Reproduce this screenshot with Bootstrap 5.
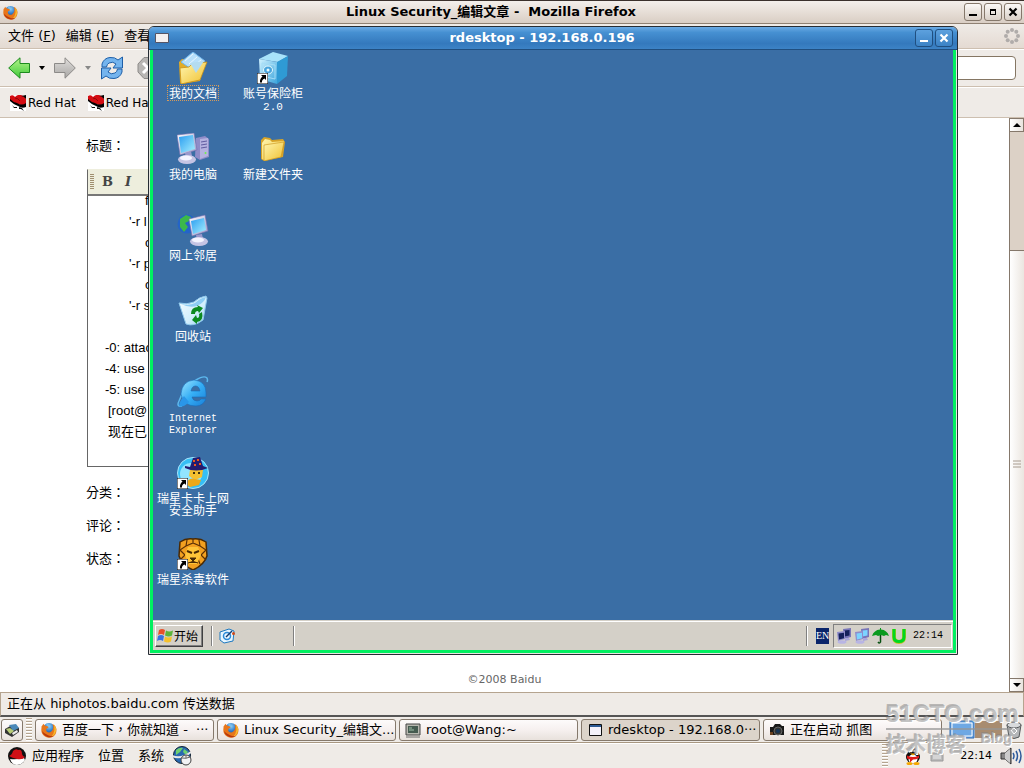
<!DOCTYPE html>
<html lang="zh-CN">
<head>
<meta charset="utf-8">
<meta name="viewport" content="width=device-width, initial-scale=1">
<title>Linux Security_编辑文章 - Mozilla Firefox</title>
<link href="https://cdn.jsdelivr.net/npm/bootstrap@5.3.0/dist/css/bootstrap.min.css" rel="stylesheet">
<style>
:root{--face:#efebe7;--edge:#b5a48f;--ui:"DejaVu Sans","Noto Sans CJK SC",sans-serif}
body{font:13px/20px var(--ui);color:#000;background:#fff;overflow:hidden}
svg{flex:none;display:block}
a,a:hover{color:inherit;text-decoration:none}
button{font:inherit;color:inherit;padding:0;border:0;background:none}
.face{background:var(--face)}
.title-strip{height:24px;background:linear-gradient(#f3efeb,#e4dbd3 60%,#d9cec4);border-top:1px solid #3a302c;border-bottom:1px solid #8f8173;font-weight:700;padding:0 2px 0 3px}
.title-btns{display:flex;gap:2px}
.win-btn{width:18px;height:18px;border:1px solid #85786b;border-radius:3px;background:linear-gradient(#fbf9f7,#d9d0c7);display:grid;place-items:center}
.menu-strip{height:25px;background:linear-gradient(#efebe7,#e4dad2);border-bottom:1px solid #cdbfb0;gap:10px}
.nav-strip{height:38px;border-top:1px solid #fff;border-bottom:1px solid #cdbfb0}
.nav-stop{margin-left:12px}
.mark-strip{height:31px;border-top:1px solid #fff;border-bottom:1px solid #cdbfb0;font-size:12px;gap:12px;padding-left:10px}
.mark-strip a{display:flex;align-items:center;gap:2px}
.address{width:300px;height:24px;border:1px solid #857663;border-radius:4px;background:#fff}
.page-area{min-height:0}
.page-pane{padding:16px 0 0 86px;min-height:0}
.field-name{font:13px/24px "Liberation Sans","Noto Sans CJK TC",sans-serif}
.field-row{height:33px;display:flex;align-items:center}
.editor{margin:11px 86px 9px 1px;height:298px;border:1px solid #666;border-top-color:#eeeedd}
.editor-bar{height:26px;background:#eeeedd;border-bottom:2px solid #777;font:700 13px/22px "DejaVu Serif",serif;color:#444;padding-left:2px;gap:12px}
.editor-bar .grip{margin-right:-4px}
.editor-text{font:13px/21px "Liberation Sans","Noto Sans CJK SC",sans-serif;height:270px;overflow:hidden}
.lines{margin-top:-6px}
.in-1{padding-left:17px}.in-2{padding-left:20px}.in-3{padding-left:41px}.in-4{padding-left:57px}
.grip{width:4px;height:16px;background:repeating-linear-gradient(#a08f70 0 1px,transparent 1px 2px)}
.grip-tall{width:6px;height:24px;background:repeating-linear-gradient(#b5a48f 0 1px,#fff 1px 2px,var(--face) 2px 3px)}
.copyright{font:11px/24px "DejaVu Sans",sans-serif;color:#666;margin-left:-86px}
.scroller{width:15px;border-left:1px solid #85786b;background:#dcd1c6}
.scroller button{height:14px;border:1px solid #85786b;border-left:0;background:linear-gradient(90deg,#fff,#e9e3dd);display:grid;place-items:center}
.scroll-thumb{flex:428;border-top:1px solid #85786b;background:linear-gradient(90deg,#fff,#ebe6e0);display:grid;place-items:center}
.scroll-space{flex:118}
.status-strip{height:25px;border:1px solid var(--edge);border-bottom:2px solid #555;padding:0 6px;line-height:22px}
.task-strip{height:26px;border-bottom:1px solid #a89781;padding:1px 2px 0 1px;gap:3px}
.task-list{gap:3px}
.task{flex:1 1 0;min-width:0;height:22px;border:1px solid #85796c;border-radius:3px;background:linear-gradient(#fdfbfb,#f6f0ef 50%,#e8e1dc);padding:0 2px 0 5px;gap:5px;display:flex;align-items:center;white-space:nowrap;overflow:hidden}
.task.pressed{background:#dcd4ca}
.task.task-small{flex:0 0 22px;padding:0;justify-content:center}
.panel-strip{height:25px;border-top:1px solid #fff;padding:0 2px 0 8px}
.panel-menu{gap:14px;margin-left:6px}
.tray-clock{font-size:11px}
/* remote session window */
.rdp{position:absolute;left:148px;right:66px;top:26px;bottom:113px;border:1px solid #262c34;border-radius:6px 6px 0 0;background:#e9e6e2;overflow:hidden;z-index:2}
.rdp-title{height:23px;background:linear-gradient(#6aaae4,#4690d2 25%,#3479bd 75%,#3c83c6);border-bottom:1px solid #204f80;color:#fff;font-weight:700}
.rdp-btn{width:18px;height:18px;border:1px solid #204f80;border-radius:3px;background:linear-gradient(#5da1de,#3b82c5);display:grid;place-items:center}
.rdp-screen{margin:0 1px 1px;border:3px solid #00f060;border-top:0;background:#3a6ea5;min-height:0}
.desk{display:grid;grid-template-rows:repeat(7,81px);grid-auto-columns:80px;grid-auto-flow:column;overflow:hidden;min-height:0}
.desk a{display:flex;flex-direction:column;align-items:center;color:#fff;font:12px/12px "Noto Sans CJK SC",sans-serif;text-align:center;padding-top:2px;gap:1px;white-space:nowrap}
.desk span{padding:1px;border:1px dotted transparent}
.desk .picked{border-color:#d59a5a}
.desk .ie-name{font-family:"Liberation Mono",monospace;font-size:10px;padding-top:3px}
.desk .mono-ver{font-family:"Liberation Mono",monospace;font-size:11px}
.win-bar{height:30px;background:#d4d0c8;border-top:1px solid #d4d0c8;box-shadow:inset 0 1px #fff;font:12px/16px "Noto Sans CJK SC",sans-serif;padding:0 1px 0 2px}
.start{height:22px;width:48px;border:1px solid;border-color:#fff #404040 #404040 #fff;box-shadow:inset -1px -1px #808080;background:#d4d0c8;display:flex;align-items:center;padding-left:1px;white-space:nowrap}
.divide{width:2px;height:20px;border-left:1px solid #808080;border-right:1px solid #fff}
.quick{width:82px;border-right:1px solid #fff;height:20px;box-shadow:inset -1px 0 #808080;padding:2px 6px}
.lang{background:#0a246a;color:#fff;width:13px;height:16px;overflow:hidden;font:10px/16px "Liberation Serif",serif}
.tray{height:24px;border:1px solid;border-color:#808080 #fff #fff #808080;padding:0 8px 0 2px;gap:2px;font:10px/20px "Liberation Mono",monospace}
.scr-off{--scr:#14205c}.scr-on{--scr:#7cd4ff}
/* site stamp in the corner */
.stamp{position:absolute;right:12px;bottom:10px;width:126px;z-index:3;color:rgba(175,175,175,.75);text-shadow:1px 1px #fff,-1px -1px rgba(130,130,130,.5);pointer-events:none;white-space:nowrap}
.stamp-top{font:700 24px/28px "Liberation Sans",sans-serif;border-bottom:2px solid rgba(150,150,150,.7)}
.stamp-sub{font:700 20px/28px "Noto Sans CJK SC",sans-serif}
.stamp-blog{font:700 14px/16px "Liberation Sans",sans-serif}
</style>
</head>
<body>
<svg width="0" height="0" class="position-absolute" aria-hidden="true">
<defs>
<radialGradient id="gGlobe" cx=".5" cy=".25" r=".8"><stop offset="0" stop-color="#8fd0f5"/><stop offset=".5" stop-color="#2f78c8"/><stop offset="1" stop-color="#123a80"/></radialGradient>
<linearGradient id="gFold" x2="1" y2="1"><stop offset="0" stop-color="#fff6b0"/><stop offset="1" stop-color="#f0c030"/></linearGradient>
<linearGradient id="gScr" x2="1" y2="1"><stop offset="0" stop-color="#2a9df0"/><stop offset="1" stop-color="#a8f0ff"/></linearGradient>
<linearGradient id="gBox" x2="1" y2="1"><stop offset="0" stop-color="#d0f2ff"/><stop offset="1" stop-color="#3ba4dc"/></linearGradient>
<linearGradient id="gSil" x2="1" y2="1"><stop offset="0" stop-color="#fff"/><stop offset="1" stop-color="#9a96c8"/></linearGradient>
<linearGradient id="gGreen" y2="1" x2="0"><stop offset="0" stop-color="#b5f58a"/><stop offset="1" stop-color="#3fc93a"/></linearGradient>
<linearGradient id="gGrey" y2="1" x2="0"><stop offset="0" stop-color="#e0dedc"/><stop offset="1" stop-color="#a8a6a4"/></linearGradient>
<linearGradient id="gBin" x2="1" y2="1"><stop offset="0" stop-color="#f6fdff"/><stop offset=".6" stop-color="#d2eefc"/><stop offset="1" stop-color="#8ccaf0"/></linearGradient>
<linearGradient id="gIe" x2="1" y2="1"><stop offset="0" stop-color="#9ce4ff"/><stop offset=".5" stop-color="#35aef5"/><stop offset="1" stop-color="#1a80d8"/></linearGradient>
</defs>
<symbol id="fox" viewBox="0 0 16 16"><circle cx="8" cy="7.400" r="6.300" fill="url(#gGlobe)"/><path d="M5 2c2-1 3 0 2.600 1L9 4 7 5z" fill="#7cc0ee"/><path d="M.6 4.200Q2 3 2.200 1.800 3 3 4.400 3.800L7 4.500 7.500 5.500 5.500 6.700Q4.600 8.500 6 9.800q2 1.300 4 0 2.400-1.500 2.200-5L11.500 2q3.600 1.500 4 5.500.1 5-3.600 7.200Q8 16.800 4 14.500.3 12 .3 8z" fill="#e8761a"/><path d="M13 2.500q2.600 3 2 6.500-1 4.500-5 6 3-3 3.400-7z" fill="#f7b92c"/><path d="M1 9q1 4.500 5.500 6 4 1 6.500-1-3 .6-6-.8-4-1.500-6-4.200z" fill="#b8380e"/></symbol>
<symbol id="hat" viewBox="0 0 16 16"><path fill="#fff" d="M0 0h16v16H0z"/><path d="M0 1q3-2 5 1 3-3 6-2 4 1 5 4v7l-5-1-6-2-5-3z" fill="#d40c12"/><path d="M0 4q3 3 7 4 5 3 9 0v4q-4 2-8-1-5-2-8-5z" fill="#000"/><path d="M11 1l5-1v4q-2-3-5-3z" fill="#000"/><path d="M2 10l2 2h3v1H4zM9 12l3 1 2 3-3-2-2 0z" fill="#111"/><path d="M5 3q3 0 5 3" stroke="#8c0808" fill="none"/></symbol>
<symbol id="folder" viewBox="0 0 24 24"><path d="M0 3l3-3 6 1 2 2 11-1 2 3-2 15-19 4-3-2z" fill="#d8a428"/><path d="M1 6l3-4 5 1 2 2 12-1-3 16-17 3-2-1z" fill="url(#gFold)"/><path d="M3 8l20-3-3 15-17 4z" fill="url(#gFold)" stroke="#c89018" stroke-width=".6"/></symbol>
<symbol id="pc" viewBox="0 0 32 32"><path d="M19 5l9-2 4 3v18l-9 3-5-3z" fill="#8f8cc8"/><path d="M23 6l8-1v18l-8 3z" fill="#b5b2e0"/><path d="M24 9l6-1M24 12l6-1M24 15l6-1" stroke="#5f5ba0"/><circle cx="28.500" cy="20" r="1" fill="#6ef04a"/><path d="M0 2l17-2 3 17-17 5z" fill="url(#gSil)" stroke="#706cae" stroke-width=".6"/><path d="M2 4l14-2 2 14-14 4z" fill="url(#gScr)"/><path d="M8 20l6-2 1 5-6 2z" fill="#9a98cc"/><ellipse cx="10" cy="26.500" rx="9" ry="4.500" fill="#c5c4e4"/><ellipse cx="9" cy="25" rx="6" ry="2.500" fill="#f4f4ff"/></symbol>
<symbol id="cut" viewBox="0 0 11 11"><path d="M0 0h11v11H0z" fill="#fff" stroke="#000"/><path d="M4 2h5v5L7.500 5.500Q4.500 7 5 9.500H3Q2.500 6 5.500 3.500z" fill="#000"/></symbol>
<symbol id="dual" viewBox="0 0 16 16"><path d="M7 1l8-1v9l-7 2z" fill="#7774b8"/><path d="M8.500 2.500l5-.6v5.500l-5 1.200z" fill="var(--scr)"/><path d="M9 10h4l1 2-5 1z" fill="#a9a6da"/><path d="M1 4l8-1v8l-7 2z" fill="#8f8cca"/><path d="M2.500 5.500l5.500-.8v5.500l-5 1.200z" fill="var(--scr)"/><ellipse cx="6" cy="14" rx="4.500" ry="1.800" fill="#b8b5e4"/></symbol>
</svg>

<div class="vh-100 d-flex flex-column position-relative">
<header class="title-strip d-flex align-items-center">
  <svg width="15" height="15"><use href="#fox"/></svg>
  <div class="flex-fill text-center">Linux Security_编辑文章 -&nbsp; Mozilla Firefox</div>
  <div class="title-btns">
    <button class="win-btn" aria-label="最小化"><svg width="10" height="10"><path d="M1 7h8v2H1z"/></svg></button>
    <button class="win-btn" aria-label="最大化"><svg width="10" height="10"><path d="M2 2h6v6H2zM3 4v3h4V4z" fill-rule="evenodd"/></svg></button>
    <button class="win-btn" aria-label="关闭"><svg width="10" height="10"><path d="M1.500 1.500l7 7M8.500 1.500l-7 7" stroke="#000" stroke-width="2.200"/></svg></button>
  </div>
</header>

<nav class="menu-strip d-flex align-items-center ps-2 pe-1">
  <a href="#">文件 (<u>F</u>)</a><a href="#">编辑 (<u>E</u>)</a><a href="#">查看</a>
  <svg class="ms-auto" width="16" height="16" viewBox="0 0 16 16" fill="#b0acaa"><circle cx="8" cy="2" r="2"/><circle cx="12.300" cy="3.700" r="2"/><circle cx="14" cy="8" r="2"/><circle cx="12.300" cy="12.300" r="2"/><circle cx="8" cy="14" r="2"/><circle cx="3.700" cy="12.300" r="2"/><circle cx="2" cy="8" r="2"/><circle cx="3.700" cy="3.700" r="2"/></svg>
</nav>

<div class="nav-strip face d-flex align-items-center ps-2 pe-1">
  <button aria-label="后退"><svg width="22" height="22"><path d="M.7 11L12 .8V6.500h9.500v9H12v5.700z" fill="url(#gGreen)" stroke="#1c8a1e"/></svg></button>
  <svg class="mx-2" width="8" height="4"><path d="M1 0h6L4 4z"/></svg>
  <button aria-label="前进"><svg width="22" height="22"><path d="M21.300 11L11 .8V6.500H.5v9H11v5.700z" fill="url(#gGrey)" stroke="#8c8a88"/></svg></button>
  <svg class="mx-2" width="8" height="4"><path d="M1 0h6L4 4z" fill="#888"/></svg>
  <button aria-label="刷新"><svg width="24" height="24" viewBox="0 0 24 24" fill="#74b4ee" stroke="#1e5fa8"><path d="M2 11V8Q4 2 10 1.500q5-.5 8 2.500l4.500-3v11H13l3-4q-3-3-7-1-2 1-2.500 4z"/><path d="M22 13v3q-2 6-8 6.500-5 .5-8-2.500l-4.500 3V12H11l-3 4q3 3 7 1 2-1 2.500-4z"/></svg></button>
  <svg class="nav-stop" width="24" height="24" viewBox="0 0 24 24"><path d="M8 1.500h8L23 8v8l-7 6.500H8L2 16V8z" fill="#b8b6b4" stroke="#8c8a88"/><path d="M7 7l5 5-5 5M17 7l-5 5 5 5" stroke="#fff" stroke-width="3" fill="none"/></svg>
  <input class="address ms-auto me-1" type="text" aria-label="地址">
</div>

<nav class="mark-strip face d-flex align-items-center">
  <a href="#"><svg width="16" height="16"><use href="#hat"/></svg>Red Hat</a>
  <a href="#"><svg width="16" height="16"><use href="#hat"/></svg>Red Hat</a>
</nav>

<main class="page-area d-flex flex-fill bg-white">
  <div class="page-pane flex-fill d-flex flex-column">
    <div class="field-name" lang="zh-TW">标题：</div>
    <section class="editor">
      <div class="editor-bar d-flex align-items-center"><span class="grip"></span><button>B</button><button class="fst-italic">I</button></div>
      <div class="editor-text"><div class="lines">
        <div class="in-4">f</div><div class="in-3">'-r l</div><div class="in-4">c</div><div class="in-3">'-r p</div><div class="in-4">c</div><div class="in-3">'-r s</div><br>
        <div class="in-1">-0: attac</div><div class="in-1">-4: use</div><div class="in-1">-5: use</div><div class="in-2">[root@</div><div class="in-2">现在已</div>
      </div></div>
    </section>
    <div class="field-name field-row" lang="zh-TW">分类：</div>
    <div class="field-name field-row" lang="zh-TW">评论：</div>
    <div class="field-name field-row" lang="zh-TW">状态：</div>
    <footer class="copyright text-center mt-auto">©2008 Baidu</footer>
  </div>
  <div class="scroller d-flex flex-column">
    <button aria-label="向上"><svg width="8" height="4"><path d="M0 4h8L4 0z"/></svg></button>
    <div class="scroll-space"></div>
    <div class="scroll-thumb"><svg width="8" height="8"><path d="M0 1h8M0 4h8M0 7h8" stroke="#a89c90"/></svg></div>
    <button aria-label="向下"><svg width="8" height="4"><path d="M0 0h8L4 4z"/></svg></button>
  </div>
</main>

<div class="status-strip face">正在从 hiphotos.baidu.com 传送数据</div>

<div class="task-strip face d-flex align-items-center">
  <button class="task task-small" aria-label="显示桌面"><svg width="16" height="14" viewBox="0 0 16 14"><path d="M1 6l7-4 7 3v4l-7 5-7-4z" fill="#333"/><path d="M5 2l7-1 3 4-6 3z" fill="#4a88b8"/><path d="M2 6l4-1 4 3-4 3z" fill="#b8cc78"/><path d="M8 10l5-3 1 2-5 3z" fill="#eee"/></svg></button>
  <span class="grip-tall"></span>
  <div class="task-list d-flex flex-fill">
    <button class="task" lang="zh-TW"><svg width="16" height="16"><use href="#fox"/></svg><span style="font-family:'DejaVu Sans','Noto Sans CJK TC',sans-serif">百度一下，你就知道 - &nbsp;···</span></button>
    <button class="task"><svg width="16" height="16"><use href="#fox"/></svg>Linux Security_编辑文...</button>
    <button class="task"><svg width="16" height="16"><path d="M1 2h14v11H1z" fill="#b8b8b0" stroke="#444"/><path d="M3 4h10v7H3z" fill="#455a50"/><path d="M4 6h3M4 8h5" stroke="#a0c0a8"/><path d="M1 15h14" stroke="#666"/></svg>root@Wang:~</button>
    <button class="task pressed"><svg width="16" height="14"><path d="M2.500 1.500h12v11h-12z" fill="#f4f2fa" stroke="#111"/><path d="M3 2h11v2H3z" fill="#2c5a94"/></svg>rdesktop - 192.168.0···</button>
    <button class="task"><svg width="16" height="14"><path d="M1 4h3l2-3h5l2 2h2v9H1z" fill="#191919"/><circle cx="9" cy="8" r="4" fill="#333" stroke="#666"/><circle cx="9" cy="8" r="2" fill="#153458"/><path d="M1 9h3v3H1z" fill="#6a4020"/></svg>正在启动 抓图</button>
  </div>
  <svg class="ms-1" width="54" height="20"><path d="M1 1h24v17H1z" fill="#6ea8e4" stroke="#2c68b0"/><path d="M3 3h20v13H3z" fill="none" stroke="#fff"/><path d="M26 1h27v17H26z" fill="#a88c70"/></svg>
  <svg width="16" height="18"><path d="M1 4l2 12q5 3 10 0l2-12z" fill="#b4b6b8" stroke="#55585a"/><ellipse cx="8" cy="4" rx="7" ry="3" fill="#d8dadc" stroke="#55585a"/><path d="M5 9l3-2 3 3-3 3z" stroke="#fff" fill="none"/></svg>
</div>

<footer class="panel-strip face d-flex align-items-center">
  <svg width="18" height="18" viewBox="0 0 18 18"><circle cx="9" cy="9" r="9" fill="#111"/><path d="M2 12q6 1 14-1l1 2q-3 5-8 5t-7-6z" fill="#fff"/><path d="M1 9q3-1 4-5 3-3 5-1 4-1 4 4l1 2 2 1q-2 3-8 2-5-1-8-3z" fill="#d01016"/></svg>
  <nav class="panel-menu d-flex"><a href="#">应用程序</a><a href="#">位置</a><a href="#">系统</a></nav>
  <svg class="ms-2" width="20" height="20" viewBox="0 0 20 20"><circle cx="10" cy="9" r="8.500" fill="#2868b0" stroke="#123"/><path d="M4 4q4-3 7-2l-3 4-4 3zM12 3l4 3-2 3-3-3z" fill="#6ed070"/><path d="M0 10q9 4 19-4" stroke="#e8e8e8" stroke-width="2" fill="none"/><ellipse cx="14" cy="14" rx="5" ry="5" fill="#f2f2f4" stroke="#444"/><path d="M10 12q4 1 8-1M14 9v3" stroke="#666" fill="none"/></svg>
  <span class="grip-tall ms-auto"></span>
  <svg class="ms-3 me-2" width="18" height="18" viewBox="0 0 18 18"><ellipse cx="9" cy="10" rx="7" ry="6.500" fill="#111"/><ellipse cx="9" cy="5" rx="4.500" ry="5" fill="#111"/><ellipse cx="9" cy="12" rx="4.500" ry="4.500" fill="#fff"/><circle cx="7.500" cy="4" r="1.200" fill="#fff"/><circle cx="10.500" cy="4" r="1.200" fill="#fff"/><path d="M6 6.500h6l-3 2z" fill="#f5a800"/><path d="M3 8.500q6 3 12 0v2.500q-3 1.500-6 1.500l-3 3v-3l-3-1z" fill="#e01818"/><ellipse cx="5.500" cy="16.500" rx="3" ry="1.500" fill="#f5a800"/><ellipse cx="12.500" cy="16.500" rx="3" ry="1.500" fill="#f5a800"/></svg>
  <svg width="14" height="12"><path d="M1 3h12v8H1z" fill="#bbb" stroke="#999"/><path d="M3 6h8M3 8h8M6 0v3" stroke="#eee"/></svg>
  <span class="ms-3 me-2 tray-clock">22:14</span>
  <svg width="22" height="18"><path d="M1 6h4l6-5v16l-6-5H1z" fill="#888" stroke="#333"/><path d="M5 6l5-4v14l-5-4z" fill="#ccc"/><path d="M13 6q2 3 0 6M16 4q3 5 0 10M19 2q4 7 0 14" stroke="#2c5a9c" stroke-width="1.500" fill="none"/></svg>
</footer>

<section class="rdp d-flex flex-column">
  <div class="rdp-title d-flex align-items-center px-1 flex-shrink-0">
    <svg width="16" height="12"><path d="M2.500 1.500h13v9h-13z" fill="#f4f0f0" stroke="#556"/></svg>
    <div class="flex-fill text-center">rdesktop - 192.168.0.196</div>
    <div class="title-btns">
      <button class="rdp-btn" aria-label="最小化"><svg width="10" height="10"><path d="M1 7h8v2H1z" fill="#fff"/></svg></button>
      <button class="rdp-btn" aria-label="关闭"><svg width="10" height="10"><path d="M1.500 1.500l7 7M8.500 1.500l-7 7" stroke="#fff" stroke-width="2.200"/></svg></button>
    </div>
  </div>
  <div class="rdp-screen d-flex flex-column flex-fill">
    <div class="desk flex-fill">
      <a href="#"><svg width="32" height="32"><path d="M2 10l3-3 6 1 2 3 14-1-4 19-19 3-1-2z" fill="#e2ac26"/><path d="M4 10l12-10 12 9-8 12z" fill="#b8e0fa" stroke="#6fb4ea"/><path d="M8 9l8-7M12 12l8-7M15 15l9-7" stroke="#e9f7ff"/><path d="M3 16l9-1 3-3 15-2-7 18-19 4z" fill="url(#gFold)" stroke="#c89018" stroke-width=".8"/><path d="M13 11l14-2-8 12z" fill="#b4dcf0"/></svg><span class="picked">我的文档</span></a>
      <a href="#"><svg width="32" height="32"><use href="#pc"/></svg><span>我的电脑</span></a>
      <a href="#"><svg width="32" height="32"><circle cx="10" cy="10" r="9.500" fill="#2464c8"/><path d="M3 5l6-4 5 2-2 4-4 2 3 4-4 5-4-5z" fill="#3cb84a"/><path d="M12 5l16-4 3 16-16 5z" fill="url(#gSil)" stroke="#706cae" stroke-width=".6"/><path d="M14 7l13-3 2 12-13 4z" fill="url(#gScr)"/><path d="M19 21l6-1 1 5-6 1z" fill="#9a98cc"/><ellipse cx="22" cy="27.500" rx="9" ry="4.500" fill="#c5c4e4"/><ellipse cx="21" cy="26" rx="6" ry="2.500" fill="#f4f4ff"/></svg><span>网上邻居</span></a>
      <a href="#"><svg width="32" height="32"><path d="M2 8q8 2 15-1Q22 2 29 1l1 2-4 22q-9 7-17 4z" fill="url(#gBin)" stroke="#8ec8ec"/><path d="M4 9q8 2 14-1 5-5 11-6-2 6-9 9-8 2-16-2z" fill="#8ecdf4"/><path d="M14 19q0-7 7-7l-1-2 6 3-4 5-1-2q-3 0-3 3zM25 17q2 9-5 10v2l-5-4 4-5 1 3q3 0 2-4z" fill="#0c8a20"/></svg><span>回收站</span></a>
      <a href="#"><svg width="32" height="32"><path d="M5 30q-6 1-3-5Q7 11 19 4q8-5 11-2 1 2 0 4" fill="none" stroke="#5cb8ee" stroke-width="1.500"/><path d="M29 21H15q1 4 5 4 3 0 4-2h5q-3 7-10 7Q6 30 4 18 5 5 17 4q12 1 12 13zM14 15h9q-1-5-4.500-5T14 15z" fill="url(#gIe)" stroke="#1a6cb8" stroke-width=".6"/><path d="M2 30q4 2 10-4l-5-6q-5 6-5 10z" fill="#2a96e8"/></svg><span class="ie-name">Internet<br>Explorer</span></a>
      <a href="#"><svg width="32" height="32"><circle cx="16" cy="16" r="15.500" fill="#36bff5" stroke="#a8e4fa"/><circle cx="14" cy="17" r="11" fill="#92e4ff"/><path d="M13 13q7-4 13 0l-1 7-7 3-6-4z" fill="#f5c030"/><path d="M9 27q3-7 9-5l6 1-2 5-9 2z" fill="#eca818"/><circle cx="17" cy="16" r="1" fill="#000"/><circle cx="22" cy="16" r="1" fill="#000"/><path d="M8 9l5 1 3-9 7-1 3 9 5 2q-12 5-23 0z" fill="#241c70"/><path d="M16 4h2M20 3h2M17 8h2M22 7h2" stroke="#e85820" stroke-width="2"/><svg x="0" y="21" width="11" height="11"><use href="#cut"/></svg></svg><span>瑞星卡卡上网<br>安全助手</span></a>
      <a href="#"><svg width="32" height="32"><path d="M3 4q6-4 13-3 7-1 13 3l1 14q-3 9-14 14Q5 27 2 18z" fill="#f2a020" stroke="#4a2a04" stroke-width="1.500"/><path d="M10 2l-1 6-6 4 5 5-5 5M22 2l1 6 6 4-5 5 5 5M9 8l7-3 7 3M16 1v4M9 26l2-5M23 26l-2-5" stroke="#5c3006" fill="none" stroke-width="1.200"/><path d="M11 9h10l3 8-4 9h-8l-4-9z" fill="#ffc438"/><path d="M10 13l5 2M22 13l-5 2" stroke="#4a2a04" stroke-width="2"/><path d="M13 20h6l-3 3zM11 25q5-3 10 0" fill="#4a2a04" stroke="#4a2a04"/><svg x="0" y="21" width="11" height="11"><use href="#cut"/></svg></svg><span>瑞星杀毒软件</span></a>
      <a href="#"><svg width="32" height="32"><path d="M2 7L16 0l15 4-10 6z" fill="#a8e2fa"/><path d="M2 7l18 3v22L3 27z" fill="url(#gBox)"/><path d="M20 10l11-6-1 20-10 8z" fill="#2f9ad4"/><path d="M5 11l13 2v14L5 24z" fill="none" stroke="#a4dcf6"/><ellipse cx="11" cy="18" rx="4.500" ry="4" fill="#4aa4dc" stroke="#e4faff"/><circle cx="11" cy="18" r="1.500" fill="#e4faff"/><svg x="0" y="21" width="11" height="11"><use href="#cut"/></svg></svg><span>账号保险柜<br><span class="mono-ver border-0 p-0">2.0</span></span></a>
      <a href="#"><svg width="32" height="32"><use href="#folder" x="4" y="4" width="24" height="24"/></svg><span>新建文件夹</span></a>
    </div>
    <div class="win-bar d-flex align-items-center flex-shrink-0">
      <button class="start"><svg width="17" height="16" viewBox="0 0 17 16"><path d="M2 2q3-2 6 0L7 7Q4 5 1 7z" fill="#e8502a"/><path d="M9 2.500q3 2 7 0L15 7.500q-3 2-7 0z" fill="#5cb43a"/><path d="M1 8q3-2 6 0l-1 5q-3-2-6 0z" fill="#3a72e0"/><path d="M8 8.500q3 2 7 0l-1 5q-3 2-7 0z" fill="#f5c02a"/></svg>开始</button>
      <span class="divide ms-2"></span>
      <div class="quick me-auto"><svg width="16" height="16"><path d="M1 4l9-3 5 2-1 10-9 2-4-3z" fill="#e8f6ff" stroke="#1c78c0"/><circle cx="8" cy="8" r="3.500" fill="none" stroke="#2a8ad8" stroke-width="1.500"/><path d="M7 9l6-6" stroke="#123a70" stroke-width="1.500"/><circle cx="14.500" cy="5.500" r="1.500" fill="#d04818"/></svg></div>
      <span class="divide me-2"></span>
      <span class="lang me-1">EN</span>
      <div class="tray d-flex align-items-center">
        <svg class="scr-off" width="16" height="16"><use href="#dual"/></svg>
        <svg class="scr-on" width="16" height="16"><use href="#dual"/></svg>
        <svg width="17" height="16"><path d="M0 8q2-6 8-6.500V0h1v1.500Q15 2 17 8l-3-1-2 1-3-1-3 1-2-1z" fill="#0a9a1e"/><path d="M8.500 7v7q-1 2-2.500 0" stroke="#064f10" stroke-width="1.500" fill="none"/></svg>
        <svg width="16" height="16"><path d="M3 1v8q0 5 5 5t5-5V1" stroke="#c8c020" stroke-width="4" fill="none"/><path d="M3 1v8q0 4.500 5 4.500T13 9V1" stroke="#00d820" stroke-width="3" fill="none"/></svg>
        <span class="ms-1">22:14</span>
      </div>
    </div>
  </div>
</section>

<div class="stamp">
  <div class="stamp-top">51CTO.com</div>
  <div class="d-flex justify-content-between"><span class="stamp-sub">技术博客</span><span class="stamp-blog">Blog</span></div>
</div>
</div>
<script src="https://cdn.jsdelivr.net/npm/bootstrap@5.3.0/dist/js/bootstrap.bundle.min.js"></script>
</body>
</html>
